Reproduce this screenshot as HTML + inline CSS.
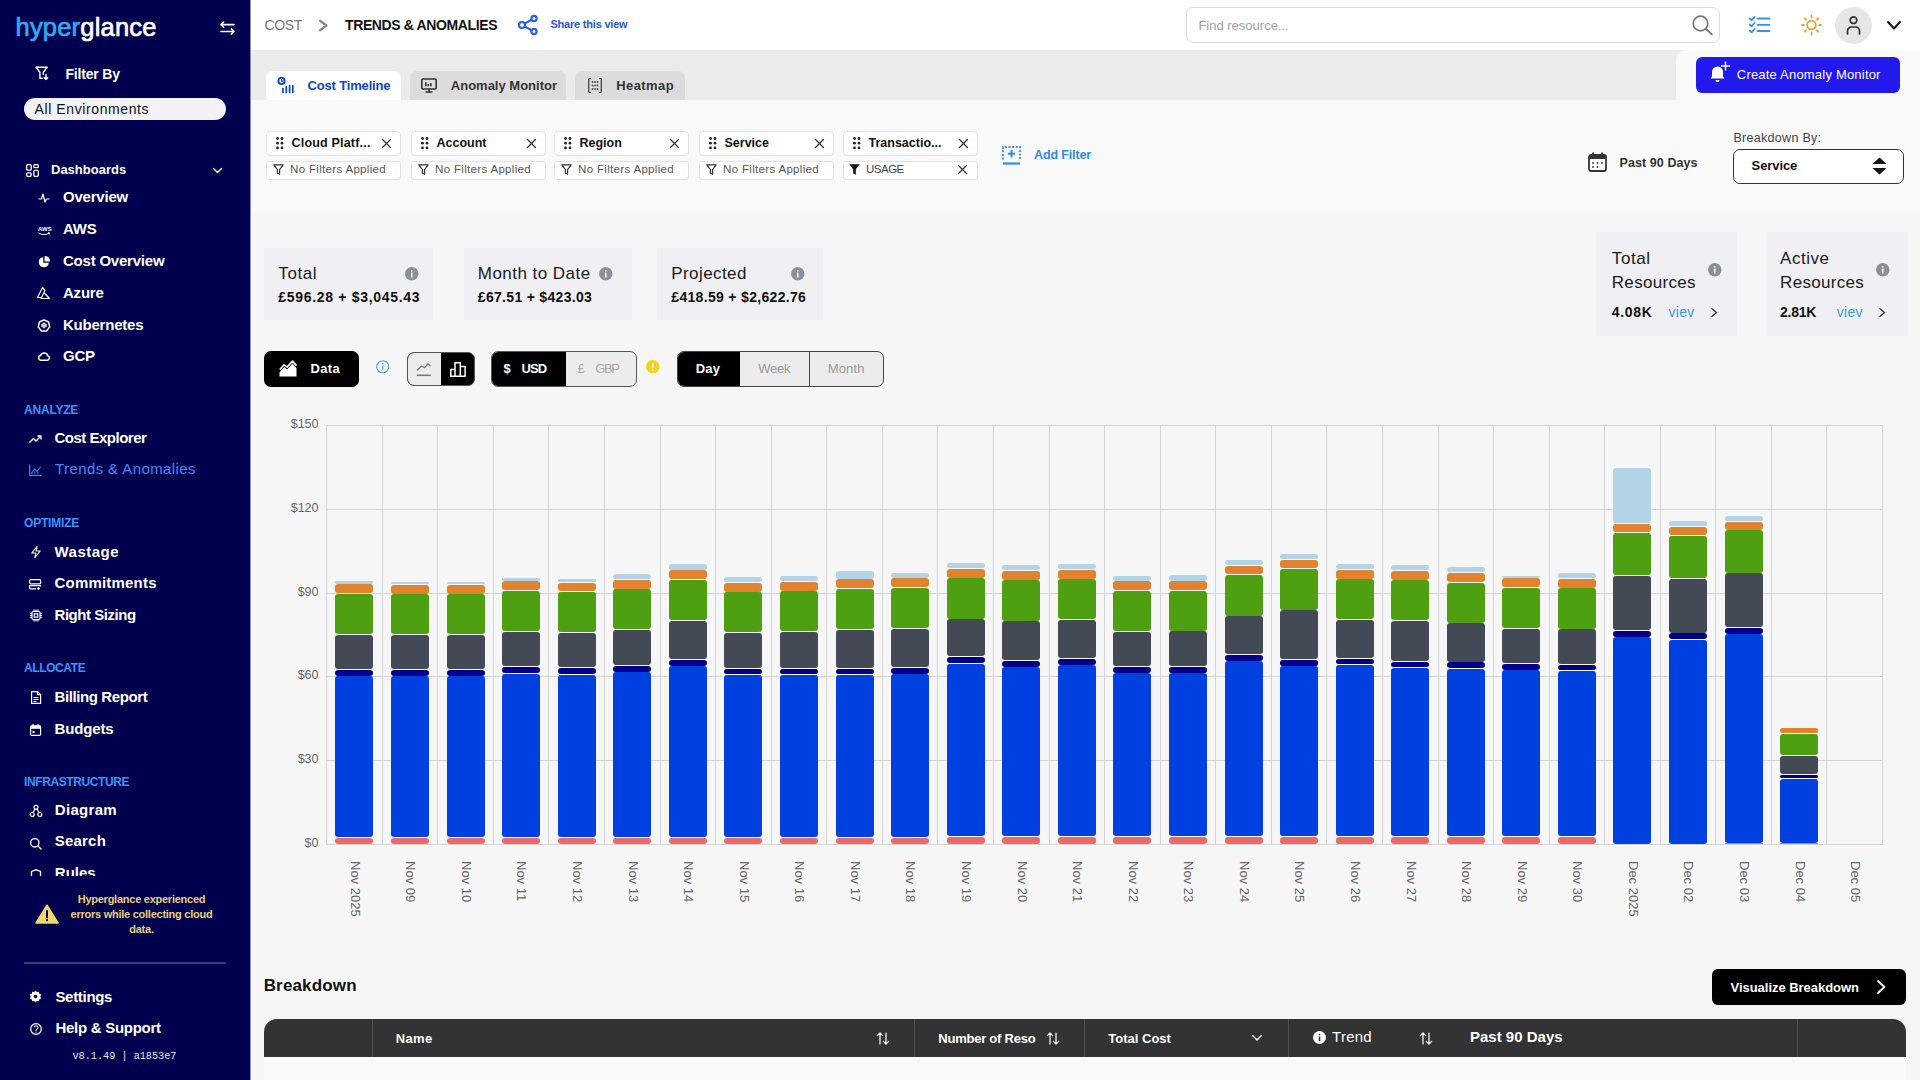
<!DOCTYPE html>
<html><head><meta charset="utf-8">
<style>
*{box-sizing:border-box;margin:0;padding:0}
html,body{width:1920px;height:1080px;overflow:hidden}
body{position:relative;background:#f6f6f6;font-family:"Liberation Sans",sans-serif;color:#111}
.a{position:absolute}
.t{position:absolute;white-space:nowrap;line-height:1}
svg{position:absolute;overflow:visible}
.vl{position:absolute;writing-mode:vertical-rl;white-space:nowrap;line-height:1;font-size:13px;color:#666}
</style></head><body>
<div class="a" style="left:0px;top:0px;width:250px;height:1080px;background:#00004e;"></div>
<div class="a" style="left:250px;top:0px;width:1px;height:1080px;background:#8c8cb4;"></div>
<div class="t" style="left:15.5px;top:14.5px;font-size:25.5px;letter-spacing:0.2px"><span style="color:#2eacf3;-webkit-text-stroke:0.7px #2eacf3">hyper</span><span style="color:#fff;-webkit-text-stroke:0.7px #fff">glance</span></div>
<svg style="left:220px;top:21px;" width="15" height="14" viewBox="0 0 15 14"><path d="M1 3.6h13M3.6 1L1 3.6l2.6 2.6M1 10.5h13M11.4 7.9l2.6 2.6-2.6 2.6" fill="none" stroke="#fff" stroke-width="1.6" stroke-linecap="round" stroke-linejoin="round"/></svg>
<svg style="left:35px;top:65.5px;" width="14" height="15" viewBox="0 0 14 15"><g fill="none" stroke="#fff" stroke-width="1.4" stroke-linejoin="round" stroke-linecap="round"><path d="M1 1.2h11.2L8.3 6.2V8.5M4.9 6.2L1 1.2M4.9 6.2V12.3h2.2"/><path d="M11 8.5v5M9.3 11.8l1.7 1.7 1.7-1.7"/></g></svg>
<div class="t" style="left:65.5px;top:67.15px;font-size:14px;font-weight:bold;color:#fff;letter-spacing:-0.2px;">Filter By</div>
<div class="a" style="left:24px;top:98px;width:202px;height:22px;background:#f3f3f7;border-radius:11px;"></div>
<div class="t" style="left:34.5px;top:101.85px;font-size:14px;color:#111;letter-spacing:0.6px;">All Environments</div>
<svg style="left:26px;top:164px;" width="13" height="13" viewBox="0 0 13 13"><g fill="none" stroke="#fff" stroke-width="1.3"><rect x="0.7" y="0.7" width="4.5" height="5.5" rx="1"/><rect x="7.8" y="0.7" width="4.5" height="3" rx="1"/><rect x="0.7" y="8.8" width="4.5" height="3.5" rx="1"/><rect x="7.8" y="6.3" width="4.5" height="6" rx="1"/></g></svg>
<div class="t" style="left:51.0px;top:163.40px;font-size:13px;font-weight:bold;color:#fff;">Dashboards</div>
<svg style="left:213px;top:168px;" width="9" height="5" viewBox="0 0 9 5"><path d="M0.5 0.5l4 4 4-4" fill="none" stroke="#fff" stroke-width="1.3" stroke-linecap="round"/></svg>
<div class="t" style="left:63.0px;top:188.90px;font-size:15px;font-weight:bold;color:#fff;letter-spacing:-0.22px;">Overview</div>
<div class="t" style="left:63.0px;top:220.50px;font-size:15px;font-weight:bold;color:#fff;letter-spacing:-0.22px;">AWS</div>
<div class="t" style="left:63.0px;top:252.50px;font-size:15px;font-weight:bold;color:#fff;letter-spacing:-0.22px;">Cost Overview</div>
<div class="t" style="left:63.0px;top:284.50px;font-size:15px;font-weight:bold;color:#fff;letter-spacing:-0.22px;">Azure</div>
<div class="t" style="left:63.0px;top:316.50px;font-size:15px;font-weight:bold;color:#fff;letter-spacing:-0.22px;">Kubernetes</div>
<div class="t" style="left:63.0px;top:347.50px;font-size:15px;font-weight:bold;color:#fff;letter-spacing:-0.22px;">GCP</div>
<svg style="left:38px;top:193px;" width="12" height="10" viewBox="0 0 12 10"><path d="M0.5 6h3l1.5-5 2 8 1.5-3h3" fill="none" stroke="#fff" stroke-width="1.2" stroke-linejoin="round"/></svg>
<svg style="left:38px;top:225px;" width="12" height="11" viewBox="0 0 12 11"><text x="0" y="6" font-size="6" font-weight="bold" fill="#fff" font-family="Liberation Sans">AWS</text><path d="M0.5 8c3 2 8 2 11 0M10 7.5l1.5 0.5-0.5 1.5" fill="none" stroke="#fff" stroke-width="1"/></svg>
<svg style="left:38px;top:256px;" width="12" height="12" viewBox="0 0 12 12"><path d="M5.3 1.2A5 5 0 1 0 10.8 6.7H5.3z" fill="#fff"/><path d="M6.6 0A5 5 0 0 1 12 5.4H6.6z" fill="#fff"/></svg>
<svg style="left:37px;top:287px;" width="13" height="12" viewBox="0 0 13 12"><path d="M5.5 0.5L0.5 10.5h4L8 3.5zM6.8 5.5l5.7 6H3.5" fill="none" stroke="#fff" stroke-width="1.2" stroke-linejoin="round"/></svg>
<svg style="left:38px;top:319px;" width="12" height="12" viewBox="0 0 12 12"><path d="M6 0.8l4.6 2.2 1.1 5-3.2 4H3.5L0.3 8l1.1-5z" fill="none" stroke="#fff" stroke-width="1.4" stroke-linejoin="round"/><circle cx="6" cy="6.4" r="2" fill="none" stroke="#fff" stroke-width="1"/><path d="M6 3v6.8M2.9 5.2l6.2 2.4M9.1 5.2L2.9 7.6" stroke="#fff" stroke-width="0.8"/></svg>
<svg style="left:38px;top:351px;" width="12" height="10" viewBox="0 0 12 10"><path d="M3.2 9.2h6a2.3 2.3 0 0 0 .6-4.5A3.8 3.8 0 0 0 2.6 4.6 2.3 2.3 0 0 0 3.2 9.2z" fill="none" stroke="#fff" stroke-width="1.5" stroke-linejoin="round"/></svg>
<div class="t" style="left:24.0px;top:403.84px;font-size:12px;font-weight:bold;color:#3597f7;letter-spacing:-0.2px;">ANALYZE</div>
<svg style="left:29px;top:435px;" width="13" height="8" viewBox="0 0 13 8"><path d="M0.5 7.5l4-4 2.5 2.5 5-5M9 1h3v3" fill="none" stroke="#fff" stroke-width="1.3" stroke-linejoin="round" stroke-linecap="round"/></svg>
<div class="t" style="left:54.5px;top:429.70px;font-size:15px;font-weight:bold;color:#fff;letter-spacing:-0.5px;">Cost Explorer</div>
<svg style="left:29px;top:464px;" width="13" height="12" viewBox="0 0 13 12"><path d="M0.7 0.5v11h11.5" fill="none" stroke="#3a8ef5" stroke-width="1.2"/><path d="M2.5 9l3-4 2.5 2.5 3.5-4.5" fill="none" stroke="#3a8ef5" stroke-width="1.1"/><path d="M3 10.5v-2M6 10.5v-3M9 10.5v-2.5" stroke="#3a8ef5" stroke-width="1"/></svg>
<div class="t" style="left:55.0px;top:460.60px;font-size:15px;color:#3b8ef3;letter-spacing:0.4px;">Trends &amp; Anomalies</div>
<div class="t" style="left:24.0px;top:516.84px;font-size:12px;font-weight:bold;color:#3597f7;letter-spacing:-0.2px;">OPTIMIZE</div>
<svg style="left:31px;top:546px;" width="10" height="12" viewBox="0 0 10 12"><path d="M6 0.5L0.8 7h4L4 11.5 9.2 5h-4z" fill="none" stroke="#fff" stroke-width="1.2" stroke-linejoin="round"/></svg>
<div class="t" style="left:54.5px;top:543.50px;font-size:15px;font-weight:bold;color:#fff;letter-spacing:0.5px;">Wastage</div>
<svg style="left:29px;top:579px;" width="13" height="11" viewBox="0 0 13 11"><g fill="none" stroke="#fff" stroke-width="1.2"><rect x="0.6" y="0.6" width="11" height="4.2" rx="1"/><path d="M7 9.8H1.6a1 1 0 0 1-1-1V6.6h11v1"/><path d="M9.5 8v3M8 9.5h3"/></g></svg>
<div class="t" style="left:54.5px;top:574.70px;font-size:15px;font-weight:bold;color:#fff;letter-spacing:0.2px;">Commitments</div>
<svg style="left:30px;top:609px;" width="12" height="13" viewBox="0 0 12 13"><g fill="none" stroke="#fff" stroke-width="1.2"><rect x="2" y="2.5" width="8" height="8" rx="1.2"/><rect x="4.3" y="4.8" width="3.4" height="3.4"/><path d="M4 0.5v2M6 0.5v2M8 0.5v2M4 10.5v2M6 10.5v2M8 10.5v2M0 4.5h2M0 6.5h2M0 8.5h2M10 4.5h2M10 6.5h2M10 8.5h2"/></g></svg>
<div class="t" style="left:54.5px;top:606.90px;font-size:15px;font-weight:bold;color:#fff;letter-spacing:-0.45px;">Right Sizing</div>
<div class="t" style="left:24.0px;top:661.84px;font-size:12px;font-weight:bold;color:#3597f7;letter-spacing:-0.4px;">ALLOCATE</div>
<svg style="left:31px;top:691px;" width="10" height="13" viewBox="0 0 10 13"><g fill="none" stroke="#fff" stroke-width="1.2" stroke-linejoin="round"><path d="M0.6 0.6h6l3 3v8.8H0.6z"/><path d="M6.5 0.6v3h3M2.5 6.5h5M2.5 8.5h5M2.5 10.5h3"/></g></svg>
<div class="t" style="left:54.5px;top:689.10px;font-size:15px;font-weight:bold;color:#fff;letter-spacing:-0.4px;">Billing Report</div>
<svg style="left:30px;top:724px;" width="11" height="12" viewBox="0 0 11 12"><g fill="none" stroke="#fff" stroke-width="1.2"><rect x="0.6" y="1.8" width="10" height="9.6" rx="1.2"/><path d="M3 0v3M8 0v3"/></g><rect x="0.6" y="1.8" width="10" height="3" fill="#fff"/><rect x="2.5" y="7" width="2" height="2" fill="#fff"/></svg>
<div class="t" style="left:54.5px;top:721.10px;font-size:15px;font-weight:bold;color:#fff;letter-spacing:-0.15px;">Budgets</div>
<div class="t" style="left:24.0px;top:775.84px;font-size:12px;font-weight:bold;color:#3597f7;letter-spacing:-0.4px;">INFRASTRUCTURE</div>
<svg style="left:30px;top:805px;" width="12" height="12" viewBox="0 0 12 12"><g fill="none" stroke="#fff" stroke-width="1.2"><circle cx="6" cy="2.3" r="2"/><circle cx="2.2" cy="9.5" r="2"/><circle cx="9.8" cy="9.5" r="2"/><path d="M5 4l-2 3.6M7 4l2 3.6"/></g></svg>
<div class="t" style="left:54.8px;top:801.80px;font-size:15px;font-weight:bold;color:#fff;letter-spacing:0.3px;">Diagram</div>
<svg style="left:30px;top:838px;" width="12" height="12" viewBox="0 0 12 12"><g fill="none" stroke="#fff" stroke-width="1.3"><circle cx="4.8" cy="4.8" r="4.2"/><path d="M8 8l3.5 3.5"/></g></svg>
<div class="t" style="left:54.8px;top:833.20px;font-size:15px;font-weight:bold;color:#fff;letter-spacing:0.2px;">Search</div>
<div class="a" style="left:0;top:860px;width:250px;height:16px;overflow:hidden">
<svg style="left:30px;top:9px;" width="12" height="14" viewBox="0 0 12 14"><path d="M1.5 2.5L6 0.8l4.5 1.7V7.5Q10.5 11.5 6 13.5Q1.5 11.5 1.5 7.5z" fill="none" stroke="#fff" stroke-width="1.3"/></svg>
<div class="t" style="left:54.8px;top:5px;font-size:15px;font-weight:bold;color:#fff">Rules</div></div>
<svg style="left:35px;top:904px;" width="24" height="20" viewBox="0 0 24 20"><path d="M12 1.2L23 19H1z" fill="#f2d76b" stroke="#f2d76b" stroke-width="1.5" stroke-linejoin="round"/><path d="M12 7v6.5" stroke="#00004e" stroke-width="2" stroke-linecap="round"/><circle cx="12" cy="16.2" r="1.1" fill="#00004e"/></svg>
<div class="t" style="left:60px;width:163px;text-align:center;top:893.69px;font-size:11px;font-weight:bold;color:#e8d277;letter-spacing:-0.25px">Hyperglance experienced</div>
<div class="t" style="left:60px;width:163px;text-align:center;top:909.09px;font-size:11px;font-weight:bold;color:#e8d277;letter-spacing:-0.25px">errors while collecting cloud</div>
<div class="t" style="left:60px;width:163px;text-align:center;top:924.49px;font-size:11px;font-weight:bold;color:#e8d277;letter-spacing:-0.25px">data.</div>
<div class="a" style="left:24px;top:962px;width:202px;height:1.5px;background:#3c3c78;"></div>
<svg style="left:29px;top:990px;" width="13" height="13" viewBox="0 0 13 13"><path d="M6.5 0.5l1.3 1.6 2-.4.5 2 1.9.9-.9 1.9.9 1.9-1.9.9-.5 2-2-.4-1.3 1.6-1.3-1.6-2 .4-.5-2-1.9-.9.9-1.9-.9-1.9 1.9-.9.5-2 2 .4z" fill="#fff"/><circle cx="6.5" cy="6.5" r="1.8" fill="#00004e"/></svg>
<div class="t" style="left:55.4px;top:988.60px;font-size:15px;font-weight:bold;color:#fff;letter-spacing:-0.3px;">Settings</div>
<svg style="left:29.6px;top:1023px;" width="12" height="12" viewBox="0 0 12 12"><circle cx="6" cy="6" r="5.3" fill="none" stroke="#fff" stroke-width="1.2"/><path d="M4.3 4.6a1.8 1.8 0 1 1 2.4 1.7c-.5.2-.7.6-.7 1.1v.4" fill="none" stroke="#fff" stroke-width="1.1"/><circle cx="6" cy="9.1" r="0.7" fill="#fff"/></svg>
<div class="t" style="left:55.4px;top:1020.30px;font-size:15px;font-weight:bold;color:#fff;letter-spacing:-0.27px;">Help &amp; Support</div>
<div class="t" style="left:72.5px;top:1051.5px;font-size:10.2px;font-family:'Liberation Mono',monospace;color:#e6e6f0">v8.1.49 | a1853e7</div>
<div class="a" style="left:251px;top:0px;width:1669px;height:50px;background:#ffffff;"></div>
<div class="a" style="left:251px;top:50px;width:1425px;height:50px;background:#ebebeb;"></div>
<div class="a" style="left:251px;top:100px;width:1669px;height:112px;background:#f9f9f9;"></div>
<div class="a" style="left:1676px;top:50px;width:244px;height:50px;background:#ebebeb;"></div>
<div class="a" style="left:1676px;top:50px;width:244px;height:50px;background:#f9f9f9;border-radius:10px 0 0 0"></div>
<div class="t" style="left:264.5px;top:18.15px;font-size:14px;color:#75757a;letter-spacing:-0.4px;">COST</div>
<svg style="left:319px;top:20px;" width="9" height="11" viewBox="0 0 9 11"><path d="M1 0.8l6.5 4.7L1 10.2" fill="none" stroke="#888" stroke-width="2.3" stroke-linecap="round" stroke-linejoin="round"/></svg>
<div class="t" style="left:345.0px;top:18.15px;font-size:14px;font-weight:bold;color:#111;letter-spacing:-0.38px;">TRENDS &amp; ANOMALIES</div>
<svg style="left:518px;top:15px;" width="20" height="20" viewBox="0 0 20 20"><g fill="none" stroke="#2d5fe2" stroke-width="2.2"><circle cx="4" cy="10" r="3"/><circle cx="16" cy="3.5" r="2.6"/><circle cx="16" cy="16.5" r="2.6"/><path d="M6.6 8.6l7-3.8M6.6 11.4l7 3.8"/></g></svg>
<div class="t" style="left:550.4px;top:18.69px;font-size:11px;font-weight:bold;color:#2c57da;letter-spacing:-0.2px;">Share this view</div>
<div class="a" style="left:1186px;top:7px;width:534px;height:36px;border:1px solid #dcdcdc;border-radius:7px;background:#fff"></div>
<div class="t" style="left:1198.4px;top:18.50px;font-size:13px;color:#9ba0a8;">Find resource...</div>
<svg style="left:1692px;top:15px;" width="21" height="20" viewBox="0 0 21 20"><g fill="none" stroke="#777" stroke-width="1.7"><circle cx="8.5" cy="8.5" r="7.3"/><path d="M14 14l6 5.5" stroke-linecap="round"/></g></svg>
<svg style="left:1749px;top:16px;" width="21" height="18" viewBox="0 0 21 18"><g fill="none" stroke="#3590e6" stroke-width="1.8" stroke-linecap="round" stroke-linejoin="round"><path d="M0.8 2.5l1.8 1.8L5.5 1M0.8 8.5l1.8 1.8L5.5 7M0.8 14.5l1.8 1.8L5.5 13"/><path d="M8.5 2.5h12M8.5 8.8h12M8.5 15h12"/></g></svg>
<svg style="left:1801px;top:15px;" width="21" height="20" viewBox="0 0 21 20"><g fill="none" stroke="#f19c2d" stroke-width="1.8" stroke-linecap="round"><circle cx="10.5" cy="10" r="4.3"/><path d="M10.5 0.5v1.8M10.5 17.7v1.8M1 10h1.8M18.2 10H20M3.8 3.3l1.3 1.3M15.9 15.4l1.3 1.3M3.8 16.7l1.3-1.3M15.9 4.6l1.3-1.3"/></g></svg>
<div class="a" style="left:1835px;top:7px;width:37px;height:37px;background:#e6e6e6;border-radius:19px;"></div>
<svg style="left:1845px;top:16px;" width="17" height="19" viewBox="0 0 17 19"><g fill="none" stroke="#333" stroke-width="1.7"><circle cx="8.5" cy="4.2" r="3.3"/><path d="M2.5 18v-3a4 4 0 0 1 4-4h4a4 4 0 0 1 4 4v3" stroke-linecap="round"/></g></svg>
<svg style="left:1887px;top:20.5px;" width="14" height="8.5" viewBox="0 0 14 8.5"><path d="M1 1l6 6.5 6-6.5" fill="none" stroke="#111" stroke-width="2" stroke-linecap="round" stroke-linejoin="round"/></svg>
<div class="a" style="left:266px;top:71px;width:135px;height:29px;background:#fff;border-radius:7px 7px 0 0"></div>
<div class="a" style="left:410px;top:71px;width:156px;height:29px;background:#dcdcdc;border-radius:7px 7px 0 0"></div>
<div class="a" style="left:575px;top:71px;width:110px;height:29px;background:#dcdcdc;border-radius:7px 7px 0 0"></div>
<svg style="left:277px;top:77px;" width="17" height="17" viewBox="0 0 17 17"><circle cx="4.5" cy="4" r="3.1" fill="none" stroke="#0b44cc" stroke-width="1.9"/><path d="M4.5 2.3v1.9h1.8" fill="none" stroke="#0b44cc" stroke-width="1.2"/><path d="M6 11.5v4M9.3 9.5v6M12.6 8.5v7M15.8 8.5v7" stroke="#0b44cc" stroke-width="1.7" stroke-linecap="round"/></svg>
<div class="t" style="left:307.4px;top:79.20px;font-size:13px;font-weight:bold;color:#0b44cc;letter-spacing:-0.15px;">Cost Timeline</div>
<svg style="left:421px;top:78px;" width="16" height="15" viewBox="0 0 16 15"><g fill="none" stroke="#333" stroke-width="1.6"><rect x="0.8" y="1" width="14.4" height="10" rx="1.2"/><path d="M8 11v2.8M4.5 14h7M4.8 8.3V4.3M7.3 8.3V6M9.8 8.3V5.3"/></g></svg>
<div class="t" style="left:450.8px;top:79.20px;font-size:13px;font-weight:bold;color:#333;">Anomaly Monitor</div>
<svg style="left:588px;top:78px;" width="14" height="15" viewBox="0 0 14 15"><g fill="none" stroke="#444" stroke-width="1.3"><path d="M3 0.7H1.5a.8.8 0 0 0-.8.8v12a.8.8 0 0 0 .8.8H3M11 0.7h1.5a.8.8 0 0 1 .8.8v12a.8.8 0 0 1-.8.8H11"/></g><g fill="#444"><circle cx="4.5" cy="4" r="0.9"/><circle cx="7" cy="4" r="0.9"/><circle cx="9.5" cy="4" r="0.9"/><circle cx="4.5" cy="7.5" r="0.9"/><circle cx="7" cy="7.5" r="0.9"/><circle cx="9.5" cy="7.5" r="0.9"/><circle cx="4.5" cy="11" r="0.9"/><circle cx="7" cy="11" r="0.9"/><circle cx="9.5" cy="11" r="0.9"/></g></svg>
<div class="t" style="left:616.3px;top:79.20px;font-size:13px;font-weight:bold;color:#333;letter-spacing:0.4px;">Heatmap</div>
<div class="a" style="left:1696px;top:57px;width:204px;height:35.5px;background:#2219ee;border-radius:6px"></div>
<svg style="left:1710px;top:61px;" width="21" height="21" viewBox="0 0 21 21"><path d="M7.5 5.5a5.5 5.5 0 0 0-5.5 5.5v4.5L0.5 17.5h14L13 15.5V11a5.5 5.5 0 0 0-5.5-5.5z" fill="#fff"/><path d="M5.5 19a2 2 0 0 0 4 0z" fill="#fff"/><path d="M15.5 0.5v9M11 5h9" stroke="#fff" stroke-width="1.4"/></svg>
<div class="t" style="left:1736.8px;top:67.70px;font-size:13px;color:#fff;letter-spacing:0.2px;">Create Anomaly Monitor</div>
<div class="a" style="left:266px;top:130.5px;width:135px;height:25px;background:#fff;border:1px solid #e2e2e2;border-radius:4px"></div>
<div class="a" style="left:266px;top:160.5px;width:135px;height:19.3px;background:#fff;border:1px solid #e2e2e2;border-radius:3px"></div>
<svg style="left:276px;top:137px;" width="8" height="13" viewBox="0 0 8 13"><g fill="#222"><circle cx="1.5" cy="1.5" r="1.4"/><circle cx="6" cy="1.5" r="1.4"/><circle cx="1.5" cy="6.2" r="1.4"/><circle cx="6" cy="6.2" r="1.4"/><circle cx="1.5" cy="10.9" r="1.4"/><circle cx="6" cy="10.9" r="1.4"/></g></svg>
<div class="t" style="left:291.5px;top:136.92px;font-size:12.5px;font-weight:bold;color:#111;letter-spacing:0.19px;">Cloud Platf...</div>
<svg style="left:382px;top:139px;" width="9" height="9" viewBox="0 0 9 9"><path d="M0.5 0.5l8 8M8.5 0.5l-8 8" stroke="#333" stroke-width="1.3" stroke-linecap="round"/></svg>
<svg style="left:272.5px;top:163.8px;" width="11" height="11" viewBox="0 0 11 11"><path d="M0.8 0.8h9.4L6.6 5.5v4.8L4.4 9.2V5.5z" fill="none" stroke="#333" stroke-width="1.2" stroke-linejoin="round"/></svg>
<div class="t" style="left:290.0px;top:164.47px;font-size:11.5px;color:#555;letter-spacing:0.33px;">No Filters Applied</div>
<div class="a" style="left:411px;top:130.5px;width:135px;height:25px;background:#fff;border:1px solid #e2e2e2;border-radius:4px"></div>
<div class="a" style="left:411px;top:160.5px;width:135px;height:19.3px;background:#fff;border:1px solid #e2e2e2;border-radius:3px"></div>
<svg style="left:421px;top:137px;" width="8" height="13" viewBox="0 0 8 13"><g fill="#222"><circle cx="1.5" cy="1.5" r="1.4"/><circle cx="6" cy="1.5" r="1.4"/><circle cx="1.5" cy="6.2" r="1.4"/><circle cx="6" cy="6.2" r="1.4"/><circle cx="1.5" cy="10.9" r="1.4"/><circle cx="6" cy="10.9" r="1.4"/></g></svg>
<div class="t" style="left:436.5px;top:136.92px;font-size:12.5px;font-weight:bold;color:#111;">Account</div>
<svg style="left:527px;top:139px;" width="9" height="9" viewBox="0 0 9 9"><path d="M0.5 0.5l8 8M8.5 0.5l-8 8" stroke="#333" stroke-width="1.3" stroke-linecap="round"/></svg>
<svg style="left:417.5px;top:163.8px;" width="11" height="11" viewBox="0 0 11 11"><path d="M0.8 0.8h9.4L6.6 5.5v4.8L4.4 9.2V5.5z" fill="none" stroke="#333" stroke-width="1.2" stroke-linejoin="round"/></svg>
<div class="t" style="left:435.0px;top:164.47px;font-size:11.5px;color:#555;letter-spacing:0.33px;">No Filters Applied</div>
<div class="a" style="left:554px;top:130.5px;width:135px;height:25px;background:#fff;border:1px solid #e2e2e2;border-radius:4px"></div>
<div class="a" style="left:554px;top:160.5px;width:135px;height:19.3px;background:#fff;border:1px solid #e2e2e2;border-radius:3px"></div>
<svg style="left:564px;top:137px;" width="8" height="13" viewBox="0 0 8 13"><g fill="#222"><circle cx="1.5" cy="1.5" r="1.4"/><circle cx="6" cy="1.5" r="1.4"/><circle cx="1.5" cy="6.2" r="1.4"/><circle cx="6" cy="6.2" r="1.4"/><circle cx="1.5" cy="10.9" r="1.4"/><circle cx="6" cy="10.9" r="1.4"/></g></svg>
<div class="t" style="left:579.5px;top:136.92px;font-size:12.5px;font-weight:bold;color:#111;">Region</div>
<svg style="left:670px;top:139px;" width="9" height="9" viewBox="0 0 9 9"><path d="M0.5 0.5l8 8M8.5 0.5l-8 8" stroke="#333" stroke-width="1.3" stroke-linecap="round"/></svg>
<svg style="left:560.5px;top:163.8px;" width="11" height="11" viewBox="0 0 11 11"><path d="M0.8 0.8h9.4L6.6 5.5v4.8L4.4 9.2V5.5z" fill="none" stroke="#333" stroke-width="1.2" stroke-linejoin="round"/></svg>
<div class="t" style="left:578.0px;top:164.47px;font-size:11.5px;color:#555;letter-spacing:0.33px;">No Filters Applied</div>
<div class="a" style="left:699px;top:130.5px;width:135px;height:25px;background:#fff;border:1px solid #e2e2e2;border-radius:4px"></div>
<div class="a" style="left:699px;top:160.5px;width:135px;height:19.3px;background:#fff;border:1px solid #e2e2e2;border-radius:3px"></div>
<svg style="left:709px;top:137px;" width="8" height="13" viewBox="0 0 8 13"><g fill="#222"><circle cx="1.5" cy="1.5" r="1.4"/><circle cx="6" cy="1.5" r="1.4"/><circle cx="1.5" cy="6.2" r="1.4"/><circle cx="6" cy="6.2" r="1.4"/><circle cx="1.5" cy="10.9" r="1.4"/><circle cx="6" cy="10.9" r="1.4"/></g></svg>
<div class="t" style="left:724.5px;top:136.92px;font-size:12.5px;font-weight:bold;color:#111;">Service</div>
<svg style="left:815px;top:139px;" width="9" height="9" viewBox="0 0 9 9"><path d="M0.5 0.5l8 8M8.5 0.5l-8 8" stroke="#333" stroke-width="1.3" stroke-linecap="round"/></svg>
<svg style="left:705.5px;top:163.8px;" width="11" height="11" viewBox="0 0 11 11"><path d="M0.8 0.8h9.4L6.6 5.5v4.8L4.4 9.2V5.5z" fill="none" stroke="#333" stroke-width="1.2" stroke-linejoin="round"/></svg>
<div class="t" style="left:723.0px;top:164.47px;font-size:11.5px;color:#555;letter-spacing:0.33px;">No Filters Applied</div>
<div class="a" style="left:843px;top:130.5px;width:135px;height:25px;background:#fff;border:1px solid #e2e2e2;border-radius:4px"></div>
<div class="a" style="left:843px;top:160.5px;width:135px;height:19.3px;background:#fff;border:1px solid #e2e2e2;border-radius:3px"></div>
<svg style="left:853px;top:137px;" width="8" height="13" viewBox="0 0 8 13"><g fill="#222"><circle cx="1.5" cy="1.5" r="1.4"/><circle cx="6" cy="1.5" r="1.4"/><circle cx="1.5" cy="6.2" r="1.4"/><circle cx="6" cy="6.2" r="1.4"/><circle cx="1.5" cy="10.9" r="1.4"/><circle cx="6" cy="10.9" r="1.4"/></g></svg>
<div class="t" style="left:868.5px;top:136.92px;font-size:12.5px;font-weight:bold;color:#111;">Transactio...</div>
<svg style="left:959px;top:139px;" width="9" height="9" viewBox="0 0 9 9"><path d="M0.5 0.5l8 8M8.5 0.5l-8 8" stroke="#333" stroke-width="1.3" stroke-linecap="round"/></svg>
<svg style="left:849px;top:163.8px;" width="11" height="11" viewBox="0 0 11 11"><path d="M0.3 0.3h10.4L6.8 5.2v5.5L4.2 9.5V5.2z" fill="#111"/></svg>
<div class="t" style="left:866.0px;top:164.47px;font-size:11.5px;color:#444;letter-spacing:-0.5px;">USAGE</div>
<svg style="left:958px;top:165px;" width="9" height="9" viewBox="0 0 9 9"><path d="M0.5 0.5l8 8M8.5 0.5l-8 8" stroke="#333" stroke-width="1.3" stroke-linecap="round"/></svg>
<svg style="left:1002px;top:146px;" width="19" height="19" viewBox="0 0 19 19"><g fill="none" stroke="#2f8be6" stroke-width="1.8" stroke-dasharray="2 1.6"><path d="M1 13.5V1h17v12.5"/></g><path d="M1 17.5h17" stroke="#2f8be6" stroke-width="2.2"/><path d="M9.5 4v7.5M5.8 7.8h7.4" stroke="#2f8be6" stroke-width="2"/></svg>
<div class="t" style="left:1034.0px;top:149.22px;font-size:12.5px;font-weight:bold;color:#2f8be6;letter-spacing:-0.13px;">Add Filter</div>
<svg style="left:1588px;top:152px;" width="19" height="20" viewBox="0 0 19 20"><g fill="none" stroke="#333" stroke-width="1.8"><rect x="1" y="3" width="17" height="16" rx="2"/></g><path d="M1 3h17v4H1z" fill="#333"/><path d="M5 0.5v4M14 0.5v4" stroke="#333" stroke-width="1.8"/><g fill="#333"><circle cx="5" cy="11" r="0.9"/><circle cx="9.5" cy="11" r="0.9"/><circle cx="14" cy="11" r="0.9"/><circle cx="5" cy="15" r="0.9"/><circle cx="9.5" cy="15" r="0.9"/></g></svg>
<div class="t" style="left:1619.6px;top:156.62px;font-size:12.5px;font-weight:bold;color:#333;letter-spacing:0.07px;">Past 90 Days</div>
<div class="t" style="left:1733.4px;top:131.72px;font-size:12.5px;color:#444;letter-spacing:0.3px;">Breakdown By:</div>
<div class="a" style="left:1733px;top:148.5px;width:171px;height:35px;border:1.2px solid #333;border-radius:7px;background:#fff"></div>
<div class="t" style="left:1751.6px;top:159.00px;font-size:13px;font-weight:bold;color:#111;letter-spacing:-0.1px;">Service</div>
<svg style="left:1872px;top:157px;" width="15" height="18" viewBox="0 0 15 18"><path d="M7.5 0.5L14.5 7H0.5zM0.5 11h14l-7 6.5z" fill="#111"/></svg>
<div class="a" style="left:264px;top:248px;width:169px;height:72px;background:#efeff4;"></div>
<div class="t" style="left:278.3px;top:265.41px;font-size:17px;color:#1a1a1a;letter-spacing:0.6px;">Total</div>
<svg style="left:405.2px;top:266.8px;" width="13.5" height="13.5" viewBox="0 0 13.5 13.5"><circle cx="6.75" cy="6.75" r="6.75" fill="#8a909b"/><path d="M6.75 5.67v4.859999999999999" stroke="#fff" stroke-width="1.6"/><circle cx="6.75" cy="3.7800000000000002" r="0.9" fill="#fff"/></svg>
<div class="t" style="left:278.3px;top:289.85px;font-size:14px;font-weight:bold;color:#111;letter-spacing:0.69px;">£596.28 + $3,045.43</div>
<div class="a" style="left:463.5px;top:248px;width:168px;height:72px;background:#efeff4;"></div>
<div class="t" style="left:477.8px;top:265.41px;font-size:17px;color:#1a1a1a;letter-spacing:0.46px;">Month to Date</div>
<svg style="left:599.4px;top:266.8px;" width="13.5" height="13.5" viewBox="0 0 13.5 13.5"><circle cx="6.75" cy="6.75" r="6.75" fill="#8a909b"/><path d="M6.75 5.67v4.859999999999999" stroke="#fff" stroke-width="1.6"/><circle cx="6.75" cy="3.7800000000000002" r="0.9" fill="#fff"/></svg>
<div class="t" style="left:477.8px;top:289.85px;font-size:14px;font-weight:bold;color:#111;letter-spacing:0.31px;">£67.51 + $423.03</div>
<div class="a" style="left:657px;top:248px;width:166px;height:72px;background:#efeff4;"></div>
<div class="t" style="left:671.3px;top:265.41px;font-size:17px;color:#1a1a1a;letter-spacing:0.41px;">Projected</div>
<svg style="left:791.3px;top:266.8px;" width="13.5" height="13.5" viewBox="0 0 13.5 13.5"><circle cx="6.75" cy="6.75" r="6.75" fill="#8a909b"/><path d="M6.75 5.67v4.859999999999999" stroke="#fff" stroke-width="1.6"/><circle cx="6.75" cy="3.7800000000000002" r="0.9" fill="#fff"/></svg>
<div class="t" style="left:671.3px;top:289.85px;font-size:14px;font-weight:bold;color:#111;letter-spacing:0.32px;">£418.59 + $2,622.76</div>
<div class="a" style="left:1596px;top:231.5px;width:141px;height:104px;background:#efeff4;"></div>
<div class="t" style="left:1611.8px;top:249.51px;font-size:17px;color:#1a1a1a;letter-spacing:0.6px;">Total</div>
<div class="t" style="left:1611.8px;top:273.81px;font-size:17px;color:#1a1a1a;letter-spacing:0.3px;">Resources</div>
<svg style="left:1708px;top:263.3px;" width="13.5" height="13.5" viewBox="0 0 13.5 13.5"><circle cx="6.75" cy="6.75" r="6.75" fill="#8a909b"/><path d="M6.75 5.67v4.859999999999999" stroke="#fff" stroke-width="1.6"/><circle cx="6.75" cy="3.7800000000000002" r="0.9" fill="#fff"/></svg>
<div class="t" style="left:1611.8px;top:305.05px;font-size:14px;font-weight:bold;color:#111;letter-spacing:0.67px;">4.08K</div>
<div class="t" style="left:1668.5px;top:305.05px;font-size:14px;color:#3a9be6;letter-spacing:0.3px;">viev</div>
<svg style="left:1711px;top:308px;" width="7" height="9" viewBox="0 0 7 9"><path d="M1 0.8l4.5 3.7L1 8.2" fill="none" stroke="#333" stroke-width="1.4" stroke-linecap="round"/></svg>
<div class="a" style="left:1766px;top:231.5px;width:142px;height:104px;background:#efeff4;"></div>
<div class="t" style="left:1780.1px;top:249.51px;font-size:17px;color:#1a1a1a;letter-spacing:0.5px;">Active</div>
<div class="t" style="left:1780.1px;top:273.81px;font-size:17px;color:#1a1a1a;letter-spacing:0.3px;">Resources</div>
<svg style="left:1876px;top:263.3px;" width="13.5" height="13.5" viewBox="0 0 13.5 13.5"><circle cx="6.75" cy="6.75" r="6.75" fill="#8a909b"/><path d="M6.75 5.67v4.859999999999999" stroke="#fff" stroke-width="1.6"/><circle cx="6.75" cy="3.7800000000000002" r="0.9" fill="#fff"/></svg>
<div class="t" style="left:1780.1px;top:305.05px;font-size:14px;font-weight:bold;color:#111;letter-spacing:-0.3px;">2.81K</div>
<div class="t" style="left:1836.8px;top:305.05px;font-size:14px;color:#3a9be6;letter-spacing:0.3px;">viev</div>
<svg style="left:1879.3px;top:308px;" width="7" height="9" viewBox="0 0 7 9"><path d="M1 0.8l4.5 3.7L1 8.2" fill="none" stroke="#333" stroke-width="1.4" stroke-linecap="round"/></svg>
<div class="a" style="left:263.5px;top:351px;width:95px;height:35.5px;background:#000;border-radius:7px"></div>
<svg style="left:279px;top:360px;" width="19" height="17" viewBox="0 0 19 17"><path d="M0.5 16.5V12.5L5 7l3 2.5 5.5-6 4 4.5v8.5z" fill="#fff"/><path d="M0.8 9.5L5 4.8l3 2.3 5.5-6 4 4.5" fill="none" stroke="#fff" stroke-width="1.6" stroke-linejoin="round"/></svg>
<div class="t" style="left:310.4px;top:361.60px;font-size:13px;font-weight:bold;color:#fff;letter-spacing:0.36px;">Data</div>
<svg style="left:376px;top:359.5px;" width="13.5" height="13.5" viewBox="0 0 13.5 13.5"><circle cx="6.75" cy="6.75" r="6" fill="none" stroke="#49a3ea" stroke-width="1.2"/><path d="M6.75 5.8v4" stroke="#49a3ea" stroke-width="1.3"/><circle cx="6.75" cy="3.9" r="0.8" fill="#49a3ea"/></svg>
<div class="a" style="left:407px;top:352px;width:68px;height:34px;background:#000;border:1.3px solid #555;border-radius:7px;overflow:hidden"><div class="a" style="left:0;top:0;width:33px;height:32px;background:#ececec"></div></div>
<svg style="left:416px;top:363px;" width="16" height="13" viewBox="0 0 16 13"><path d="M0.8 12.3h14" stroke="#777" stroke-width="1.5"/><path d="M1 7.5l4.5-4.5 3 1.8L12 0.8l2.5 2.5" fill="none" stroke="#777" stroke-width="1.3" stroke-linejoin="round"/></svg>
<svg style="left:450px;top:362px;" width="16" height="15" viewBox="0 0 16 15"><g fill="none" stroke="#fff" stroke-width="1.5" stroke-linejoin="round"><path d="M0.8 14.2V7.5h4.2V14.2zM5 14.2V0.8h5.3v13.4zM10.3 14.2V4.5h4.8v9.7z"/></g></svg>
<div class="a" style="left:491px;top:351px;width:146px;height:35.5px;background:#ececec;border:1.3px solid #555;border-radius:7px;overflow:hidden"><div class="a" style="left:-1px;top:-1px;width:75px;height:36px;background:#000"></div></div>
<div class="t" style="left:503.6px;top:361.60px;font-size:13px;font-weight:bold;color:#fff;">$</div>
<div class="t" style="left:521.4px;top:361.60px;font-size:13px;font-weight:bold;color:#fff;letter-spacing:-0.88px;">USD</div>
<div class="t" style="left:577.5px;top:361.60px;font-size:13px;color:#a9a9a9;">£</div>
<div class="t" style="left:595.3px;top:361.60px;font-size:13px;color:#a9a9a9;letter-spacing:-1.4px;">GBP</div>
<svg style="left:646.3px;top:359.5px;" width="13.5" height="13.5" viewBox="0 0 13.5 13.5"><circle cx="6.75" cy="6.75" r="6.75" fill="#f4d21f"/><path d="M6.75 3.3v4.5" stroke="#fff" stroke-width="1.5"/><circle cx="6.75" cy="10" r="0.9" fill="#fff"/></svg>
<div class="a" style="left:676.5px;top:351px;width:207.5px;height:35.5px;background:#ececec;border:1.3px solid #444;border-radius:7px;overflow:hidden"><div class="a" style="left:-1px;top:-1px;width:63px;height:36px;background:#000"></div><div class="a" style="left:131.5px;top:0;width:1.3px;height:36px;background:#444"></div></div>
<div class="t" style="left:695.7px;top:361.60px;font-size:13px;font-weight:bold;color:#fff;letter-spacing:0.22px;">Day</div>
<div class="t" style="left:758.2px;top:361.60px;font-size:13px;color:#9a9a9a;letter-spacing:-0.25px;">Week</div>
<div class="t" style="left:827.7px;top:361.60px;font-size:13px;color:#9a9a9a;letter-spacing:0.17px;">Month</div>
<div class="a" style="left:326.10px;top:425.30px;width:1px;height:419.40px;background:#d4d4d4"></div>
<div class="a" style="left:381.67px;top:425.30px;width:1px;height:419.40px;background:#d4d4d4"></div>
<div class="a" style="left:437.24px;top:425.30px;width:1px;height:419.40px;background:#d4d4d4"></div>
<div class="a" style="left:492.81px;top:425.30px;width:1px;height:419.40px;background:#d4d4d4"></div>
<div class="a" style="left:548.38px;top:425.30px;width:1px;height:419.40px;background:#d4d4d4"></div>
<div class="a" style="left:603.95px;top:425.30px;width:1px;height:419.40px;background:#d4d4d4"></div>
<div class="a" style="left:659.52px;top:425.30px;width:1px;height:419.40px;background:#d4d4d4"></div>
<div class="a" style="left:715.09px;top:425.30px;width:1px;height:419.40px;background:#d4d4d4"></div>
<div class="a" style="left:770.66px;top:425.30px;width:1px;height:419.40px;background:#d4d4d4"></div>
<div class="a" style="left:826.23px;top:425.30px;width:1px;height:419.40px;background:#d4d4d4"></div>
<div class="a" style="left:881.80px;top:425.30px;width:1px;height:419.40px;background:#d4d4d4"></div>
<div class="a" style="left:937.37px;top:425.30px;width:1px;height:419.40px;background:#d4d4d4"></div>
<div class="a" style="left:992.94px;top:425.30px;width:1px;height:419.40px;background:#d4d4d4"></div>
<div class="a" style="left:1048.51px;top:425.30px;width:1px;height:419.40px;background:#d4d4d4"></div>
<div class="a" style="left:1104.08px;top:425.30px;width:1px;height:419.40px;background:#d4d4d4"></div>
<div class="a" style="left:1159.65px;top:425.30px;width:1px;height:419.40px;background:#d4d4d4"></div>
<div class="a" style="left:1215.22px;top:425.30px;width:1px;height:419.40px;background:#d4d4d4"></div>
<div class="a" style="left:1270.79px;top:425.30px;width:1px;height:419.40px;background:#d4d4d4"></div>
<div class="a" style="left:1326.36px;top:425.30px;width:1px;height:419.40px;background:#d4d4d4"></div>
<div class="a" style="left:1381.93px;top:425.30px;width:1px;height:419.40px;background:#d4d4d4"></div>
<div class="a" style="left:1437.50px;top:425.30px;width:1px;height:419.40px;background:#d4d4d4"></div>
<div class="a" style="left:1493.07px;top:425.30px;width:1px;height:419.40px;background:#d4d4d4"></div>
<div class="a" style="left:1548.64px;top:425.30px;width:1px;height:419.40px;background:#d4d4d4"></div>
<div class="a" style="left:1604.21px;top:425.30px;width:1px;height:419.40px;background:#d4d4d4"></div>
<div class="a" style="left:1659.78px;top:425.30px;width:1px;height:419.40px;background:#d4d4d4"></div>
<div class="a" style="left:1715.35px;top:425.30px;width:1px;height:419.40px;background:#d4d4d4"></div>
<div class="a" style="left:1770.92px;top:425.30px;width:1px;height:419.40px;background:#d4d4d4"></div>
<div class="a" style="left:1826.49px;top:425.30px;width:1px;height:419.40px;background:#d4d4d4"></div>
<div class="a" style="left:1882.06px;top:425.30px;width:1px;height:419.40px;background:#d4d4d4"></div>
<div class="a" style="left:326.10px;top:425.30px;width:1556.96px;height:1px;background:#d4d4d4"></div>
<div class="a" style="left:326.10px;top:508.98px;width:1556.96px;height:1px;background:#d4d4d4"></div>
<div class="a" style="left:326.10px;top:592.66px;width:1556.96px;height:1px;background:#d4d4d4"></div>
<div class="a" style="left:326.10px;top:676.34px;width:1556.96px;height:1px;background:#d4d4d4"></div>
<div class="a" style="left:326.10px;top:760.02px;width:1556.96px;height:1px;background:#d4d4d4"></div>
<div class="a" style="left:326.10px;top:843.70px;width:1556.96px;height:1px;background:#d4d4d4"></div>
<div class="t" style="left:220px;width:98.5px;text-align:right;top:418.42px;font-size:12.5px;color:#666">$150</div>
<div class="t" style="left:220px;width:98.5px;text-align:right;top:502.10px;font-size:12.5px;color:#666">$120</div>
<div class="t" style="left:220px;width:98.5px;text-align:right;top:585.78px;font-size:12.5px;color:#666">$90</div>
<div class="t" style="left:220px;width:98.5px;text-align:right;top:669.46px;font-size:12.5px;color:#666">$60</div>
<div class="t" style="left:220px;width:98.5px;text-align:right;top:753.14px;font-size:12.5px;color:#666">$30</div>
<div class="t" style="left:220px;width:98.5px;text-align:right;top:836.82px;font-size:12.5px;color:#666">$0</div>
<div class="a" style="left:335.39px;top:581.10px;width:38px;height:2.75px;background:#b3d4e6;border-radius:1.4px"></div>
<div class="a" style="left:335.39px;top:584.40px;width:38px;height:9.05px;background:#e0822e;border-radius:3.0px"></div>
<div class="a" style="left:335.39px;top:594.00px;width:38px;height:40.25px;background:#4f9f12;border-radius:3.0px"></div>
<div class="a" style="left:335.39px;top:634.80px;width:38px;height:34.35px;background:#434a56;border-radius:3.0px"></div>
<div class="a" style="left:335.39px;top:669.70px;width:38px;height:6.15px;background:#00008b;border-radius:3.0px"></div>
<div class="a" style="left:335.39px;top:676.40px;width:38px;height:160.80px;background:#0040e0;border-radius:3.0px"></div>
<div class="a" style="left:335.39px;top:838.00px;width:38px;height:6.20px;background:#e86a6a;border-radius:3.0px"></div>
<div class="a" style="left:390.96px;top:581.60px;width:38px;height:2.65px;background:#b3d4e6;border-radius:1.3px"></div>
<div class="a" style="left:390.96px;top:584.80px;width:38px;height:8.95px;background:#e0822e;border-radius:3.0px"></div>
<div class="a" style="left:390.96px;top:594.30px;width:38px;height:39.95px;background:#4f9f12;border-radius:3.0px"></div>
<div class="a" style="left:390.96px;top:634.80px;width:38px;height:34.35px;background:#434a56;border-radius:3.0px"></div>
<div class="a" style="left:390.96px;top:669.70px;width:38px;height:6.15px;background:#00008b;border-radius:3.0px"></div>
<div class="a" style="left:390.96px;top:676.40px;width:38px;height:160.80px;background:#0040e0;border-radius:3.0px"></div>
<div class="a" style="left:390.96px;top:838.00px;width:38px;height:6.20px;background:#e86a6a;border-radius:3.0px"></div>
<div class="a" style="left:446.53px;top:581.90px;width:38px;height:2.35px;background:#b3d4e6;border-radius:1.2px"></div>
<div class="a" style="left:446.53px;top:584.80px;width:38px;height:8.95px;background:#e0822e;border-radius:3.0px"></div>
<div class="a" style="left:446.53px;top:594.30px;width:38px;height:39.95px;background:#4f9f12;border-radius:3.0px"></div>
<div class="a" style="left:446.53px;top:634.80px;width:38px;height:34.35px;background:#434a56;border-radius:3.0px"></div>
<div class="a" style="left:446.53px;top:669.70px;width:38px;height:6.15px;background:#00008b;border-radius:3.0px"></div>
<div class="a" style="left:446.53px;top:676.40px;width:38px;height:160.80px;background:#0040e0;border-radius:3.0px"></div>
<div class="a" style="left:446.53px;top:838.00px;width:38px;height:6.20px;background:#e86a6a;border-radius:3.0px"></div>
<div class="a" style="left:502.10px;top:578.20px;width:38px;height:2.35px;background:#b3d4e6;border-radius:1.2px"></div>
<div class="a" style="left:502.10px;top:581.10px;width:38px;height:9.25px;background:#e0822e;border-radius:3.0px"></div>
<div class="a" style="left:502.10px;top:590.90px;width:38px;height:40.25px;background:#4f9f12;border-radius:3.0px"></div>
<div class="a" style="left:502.10px;top:631.70px;width:38px;height:34.25px;background:#434a56;border-radius:3.0px"></div>
<div class="a" style="left:502.10px;top:666.50px;width:38px;height:6.45px;background:#00008b;border-radius:3.0px"></div>
<div class="a" style="left:502.10px;top:673.50px;width:38px;height:163.70px;background:#0040e0;border-radius:3.0px"></div>
<div class="a" style="left:502.10px;top:838.00px;width:38px;height:6.20px;background:#e86a6a;border-radius:3.0px"></div>
<div class="a" style="left:557.66px;top:579.40px;width:38px;height:2.65px;background:#b3d4e6;border-radius:1.3px"></div>
<div class="a" style="left:557.66px;top:582.60px;width:38px;height:8.65px;background:#e0822e;border-radius:3.0px"></div>
<div class="a" style="left:557.66px;top:591.80px;width:38px;height:40.25px;background:#4f9f12;border-radius:3.0px"></div>
<div class="a" style="left:557.66px;top:632.60px;width:38px;height:34.45px;background:#434a56;border-radius:3.0px"></div>
<div class="a" style="left:557.66px;top:667.60px;width:38px;height:6.35px;background:#00008b;border-radius:3.0px"></div>
<div class="a" style="left:557.66px;top:674.50px;width:38px;height:162.70px;background:#0040e0;border-radius:3.0px"></div>
<div class="a" style="left:557.66px;top:838.00px;width:38px;height:6.20px;background:#e86a6a;border-radius:3.0px"></div>
<div class="a" style="left:613.24px;top:574.10px;width:38px;height:5.25px;background:#b3d4e6;border-radius:2.6px"></div>
<div class="a" style="left:613.24px;top:579.90px;width:38px;height:8.95px;background:#e0822e;border-radius:3.0px"></div>
<div class="a" style="left:613.24px;top:589.40px;width:38px;height:39.95px;background:#4f9f12;border-radius:3.0px"></div>
<div class="a" style="left:613.24px;top:629.90px;width:38px;height:35.45px;background:#434a56;border-radius:3.0px"></div>
<div class="a" style="left:613.24px;top:665.90px;width:38px;height:5.75px;background:#00008b;border-radius:2.9px"></div>
<div class="a" style="left:613.24px;top:672.20px;width:38px;height:165.00px;background:#0040e0;border-radius:3.0px"></div>
<div class="a" style="left:613.24px;top:838.00px;width:38px;height:6.20px;background:#e86a6a;border-radius:3.0px"></div>
<div class="a" style="left:668.81px;top:564.30px;width:38px;height:5.25px;background:#b3d4e6;border-radius:2.6px"></div>
<div class="a" style="left:668.81px;top:570.10px;width:38px;height:9.25px;background:#e0822e;border-radius:3.0px"></div>
<div class="a" style="left:668.81px;top:579.90px;width:38px;height:40.25px;background:#4f9f12;border-radius:3.0px"></div>
<div class="a" style="left:668.81px;top:620.70px;width:38px;height:38.45px;background:#434a56;border-radius:3.0px"></div>
<div class="a" style="left:668.81px;top:659.70px;width:38px;height:5.95px;background:#00008b;border-radius:3.0px"></div>
<div class="a" style="left:668.81px;top:666.20px;width:38px;height:171.00px;background:#0040e0;border-radius:3.0px"></div>
<div class="a" style="left:668.81px;top:838.00px;width:38px;height:6.20px;background:#e86a6a;border-radius:3.0px"></div>
<div class="a" style="left:724.38px;top:577.00px;width:38px;height:5.25px;background:#b3d4e6;border-radius:2.6px"></div>
<div class="a" style="left:724.38px;top:582.80px;width:38px;height:8.95px;background:#e0822e;border-radius:3.0px"></div>
<div class="a" style="left:724.38px;top:592.30px;width:38px;height:39.95px;background:#4f9f12;border-radius:3.0px"></div>
<div class="a" style="left:724.38px;top:632.80px;width:38px;height:35.55px;background:#434a56;border-radius:3.0px"></div>
<div class="a" style="left:724.38px;top:668.90px;width:38px;height:5.55px;background:#00008b;border-radius:2.8px"></div>
<div class="a" style="left:724.38px;top:675.00px;width:38px;height:162.20px;background:#0040e0;border-radius:3.0px"></div>
<div class="a" style="left:724.38px;top:838.00px;width:38px;height:6.20px;background:#e86a6a;border-radius:3.0px"></div>
<div class="a" style="left:779.95px;top:576.00px;width:38px;height:5.25px;background:#b3d4e6;border-radius:2.6px"></div>
<div class="a" style="left:779.95px;top:581.80px;width:38px;height:8.75px;background:#e0822e;border-radius:3.0px"></div>
<div class="a" style="left:779.95px;top:591.10px;width:38px;height:40.35px;background:#4f9f12;border-radius:3.0px"></div>
<div class="a" style="left:779.95px;top:632.00px;width:38px;height:36.35px;background:#434a56;border-radius:3.0px"></div>
<div class="a" style="left:779.95px;top:668.90px;width:38px;height:5.55px;background:#00008b;border-radius:2.8px"></div>
<div class="a" style="left:779.95px;top:675.00px;width:38px;height:162.20px;background:#0040e0;border-radius:3.0px"></div>
<div class="a" style="left:779.95px;top:838.00px;width:38px;height:6.20px;background:#e86a6a;border-radius:3.0px"></div>
<div class="a" style="left:835.51px;top:570.90px;width:38px;height:7.75px;background:#b3d4e6;border-radius:3.0px"></div>
<div class="a" style="left:835.51px;top:579.20px;width:38px;height:8.85px;background:#e0822e;border-radius:3.0px"></div>
<div class="a" style="left:835.51px;top:588.60px;width:38px;height:40.75px;background:#4f9f12;border-radius:3.0px"></div>
<div class="a" style="left:835.51px;top:629.90px;width:38px;height:38.45px;background:#434a56;border-radius:3.0px"></div>
<div class="a" style="left:835.51px;top:668.90px;width:38px;height:5.55px;background:#00008b;border-radius:2.8px"></div>
<div class="a" style="left:835.51px;top:675.00px;width:38px;height:162.20px;background:#0040e0;border-radius:3.0px"></div>
<div class="a" style="left:835.51px;top:838.00px;width:38px;height:6.20px;background:#e86a6a;border-radius:3.0px"></div>
<div class="a" style="left:891.09px;top:572.60px;width:38px;height:4.95px;background:#b3d4e6;border-radius:2.5px"></div>
<div class="a" style="left:891.09px;top:578.10px;width:38px;height:9.25px;background:#e0822e;border-radius:3.0px"></div>
<div class="a" style="left:891.09px;top:587.90px;width:38px;height:40.35px;background:#4f9f12;border-radius:3.0px"></div>
<div class="a" style="left:891.09px;top:628.80px;width:38px;height:38.35px;background:#434a56;border-radius:3.0px"></div>
<div class="a" style="left:891.09px;top:667.70px;width:38px;height:6.05px;background:#00008b;border-radius:3.0px"></div>
<div class="a" style="left:891.09px;top:674.30px;width:38px;height:162.90px;background:#0040e0;border-radius:3.0px"></div>
<div class="a" style="left:891.09px;top:838.00px;width:38px;height:6.20px;background:#e86a6a;border-radius:3.0px"></div>
<div class="a" style="left:946.65px;top:563.10px;width:38px;height:5.35px;background:#b3d4e6;border-radius:2.7px"></div>
<div class="a" style="left:946.65px;top:569.00px;width:38px;height:8.55px;background:#e0822e;border-radius:3.0px"></div>
<div class="a" style="left:946.65px;top:578.10px;width:38px;height:40.65px;background:#4f9f12;border-radius:3.0px"></div>
<div class="a" style="left:946.65px;top:619.30px;width:38px;height:36.95px;background:#434a56;border-radius:3.0px"></div>
<div class="a" style="left:946.65px;top:656.80px;width:38px;height:6.15px;background:#00008b;border-radius:3.0px"></div>
<div class="a" style="left:946.65px;top:663.50px;width:38px;height:172.30px;background:#0040e0;border-radius:3.0px"></div>
<div class="a" style="left:946.65px;top:836.60px;width:38px;height:7.60px;background:#e86a6a;border-radius:3.0px"></div>
<div class="a" style="left:1002.23px;top:565.00px;width:38px;height:5.35px;background:#b3d4e6;border-radius:2.7px"></div>
<div class="a" style="left:1002.23px;top:570.90px;width:38px;height:8.85px;background:#e0822e;border-radius:3.0px"></div>
<div class="a" style="left:1002.23px;top:580.30px;width:38px;height:40.35px;background:#4f9f12;border-radius:3.0px"></div>
<div class="a" style="left:1002.23px;top:621.20px;width:38px;height:38.75px;background:#434a56;border-radius:3.0px"></div>
<div class="a" style="left:1002.23px;top:660.50px;width:38px;height:6.05px;background:#00008b;border-radius:3.0px"></div>
<div class="a" style="left:1002.23px;top:667.10px;width:38px;height:168.70px;background:#0040e0;border-radius:3.0px"></div>
<div class="a" style="left:1002.23px;top:836.60px;width:38px;height:7.60px;background:#e86a6a;border-radius:3.0px"></div>
<div class="a" style="left:1057.80px;top:563.90px;width:38px;height:5.55px;background:#b3d4e6;border-radius:2.8px"></div>
<div class="a" style="left:1057.80px;top:570.00px;width:38px;height:8.65px;background:#e0822e;border-radius:3.0px"></div>
<div class="a" style="left:1057.80px;top:579.20px;width:38px;height:40.25px;background:#4f9f12;border-radius:3.0px"></div>
<div class="a" style="left:1057.80px;top:620.00px;width:38px;height:38.05px;background:#434a56;border-radius:3.0px"></div>
<div class="a" style="left:1057.80px;top:658.60px;width:38px;height:6.05px;background:#00008b;border-radius:3.0px"></div>
<div class="a" style="left:1057.80px;top:665.20px;width:38px;height:170.60px;background:#0040e0;border-radius:3.0px"></div>
<div class="a" style="left:1057.80px;top:836.60px;width:38px;height:7.60px;background:#e86a6a;border-radius:3.0px"></div>
<div class="a" style="left:1113.37px;top:575.50px;width:38px;height:5.35px;background:#b3d4e6;border-radius:2.7px"></div>
<div class="a" style="left:1113.37px;top:581.40px;width:38px;height:8.85px;background:#e0822e;border-radius:3.0px"></div>
<div class="a" style="left:1113.37px;top:590.80px;width:38px;height:40.65px;background:#4f9f12;border-radius:3.0px"></div>
<div class="a" style="left:1113.37px;top:632.00px;width:38px;height:34.15px;background:#434a56;border-radius:3.0px"></div>
<div class="a" style="left:1113.37px;top:666.70px;width:38px;height:5.95px;background:#00008b;border-radius:3.0px"></div>
<div class="a" style="left:1113.37px;top:673.20px;width:38px;height:162.60px;background:#0040e0;border-radius:3.0px"></div>
<div class="a" style="left:1113.37px;top:836.60px;width:38px;height:7.60px;background:#e86a6a;border-radius:3.0px"></div>
<div class="a" style="left:1168.93px;top:575.40px;width:38px;height:5.35px;background:#b3d4e6;border-radius:2.7px"></div>
<div class="a" style="left:1168.93px;top:581.30px;width:38px;height:8.95px;background:#e0822e;border-radius:3.0px"></div>
<div class="a" style="left:1168.93px;top:590.80px;width:38px;height:40.05px;background:#4f9f12;border-radius:3.0px"></div>
<div class="a" style="left:1168.93px;top:631.40px;width:38px;height:34.95px;background:#434a56;border-radius:3.0px"></div>
<div class="a" style="left:1168.93px;top:666.90px;width:38px;height:5.65px;background:#00008b;border-radius:2.8px"></div>
<div class="a" style="left:1168.93px;top:673.10px;width:38px;height:162.70px;background:#0040e0;border-radius:3.0px"></div>
<div class="a" style="left:1168.93px;top:836.60px;width:38px;height:7.60px;background:#e86a6a;border-radius:3.0px"></div>
<div class="a" style="left:1224.51px;top:560.00px;width:38px;height:5.45px;background:#b3d4e6;border-radius:2.7px"></div>
<div class="a" style="left:1224.51px;top:566.00px;width:38px;height:8.45px;background:#e0822e;border-radius:3.0px"></div>
<div class="a" style="left:1224.51px;top:575.00px;width:38px;height:40.55px;background:#4f9f12;border-radius:3.0px"></div>
<div class="a" style="left:1224.51px;top:616.10px;width:38px;height:38.25px;background:#434a56;border-radius:3.0px"></div>
<div class="a" style="left:1224.51px;top:654.90px;width:38px;height:5.85px;background:#00008b;border-radius:2.9px"></div>
<div class="a" style="left:1224.51px;top:661.30px;width:38px;height:174.50px;background:#0040e0;border-radius:3.0px"></div>
<div class="a" style="left:1224.51px;top:836.60px;width:38px;height:7.60px;background:#e86a6a;border-radius:3.0px"></div>
<div class="a" style="left:1280.08px;top:553.90px;width:38px;height:5.55px;background:#b3d4e6;border-radius:2.8px"></div>
<div class="a" style="left:1280.08px;top:560.00px;width:38px;height:8.35px;background:#e0822e;border-radius:3.0px"></div>
<div class="a" style="left:1280.08px;top:568.90px;width:38px;height:40.85px;background:#4f9f12;border-radius:3.0px"></div>
<div class="a" style="left:1280.08px;top:610.30px;width:38px;height:49.05px;background:#434a56;border-radius:3.0px"></div>
<div class="a" style="left:1280.08px;top:659.90px;width:38px;height:5.65px;background:#00008b;border-radius:2.8px"></div>
<div class="a" style="left:1280.08px;top:666.10px;width:38px;height:169.70px;background:#0040e0;border-radius:3.0px"></div>
<div class="a" style="left:1280.08px;top:836.60px;width:38px;height:7.60px;background:#e86a6a;border-radius:3.0px"></div>
<div class="a" style="left:1335.64px;top:564.10px;width:38px;height:5.25px;background:#b3d4e6;border-radius:2.6px"></div>
<div class="a" style="left:1335.64px;top:569.90px;width:38px;height:8.65px;background:#e0822e;border-radius:3.0px"></div>
<div class="a" style="left:1335.64px;top:579.10px;width:38px;height:40.25px;background:#4f9f12;border-radius:3.0px"></div>
<div class="a" style="left:1335.64px;top:619.90px;width:38px;height:38.15px;background:#434a56;border-radius:3.0px"></div>
<div class="a" style="left:1335.64px;top:658.60px;width:38px;height:5.55px;background:#00008b;border-radius:2.8px"></div>
<div class="a" style="left:1335.64px;top:664.70px;width:38px;height:171.10px;background:#0040e0;border-radius:3.0px"></div>
<div class="a" style="left:1335.64px;top:836.60px;width:38px;height:7.60px;background:#e86a6a;border-radius:3.0px"></div>
<div class="a" style="left:1391.22px;top:564.80px;width:38px;height:5.25px;background:#b3d4e6;border-radius:2.6px"></div>
<div class="a" style="left:1391.22px;top:570.60px;width:38px;height:8.95px;background:#e0822e;border-radius:3.0px"></div>
<div class="a" style="left:1391.22px;top:580.10px;width:38px;height:40.25px;background:#4f9f12;border-radius:3.0px"></div>
<div class="a" style="left:1391.22px;top:620.90px;width:38px;height:40.05px;background:#434a56;border-radius:3.0px"></div>
<div class="a" style="left:1391.22px;top:661.50px;width:38px;height:5.95px;background:#00008b;border-radius:3.0px"></div>
<div class="a" style="left:1391.22px;top:668.00px;width:38px;height:167.80px;background:#0040e0;border-radius:3.0px"></div>
<div class="a" style="left:1391.22px;top:836.60px;width:38px;height:7.60px;background:#e86a6a;border-radius:3.0px"></div>
<div class="a" style="left:1446.78px;top:567.20px;width:38px;height:5.25px;background:#b3d4e6;border-radius:2.6px"></div>
<div class="a" style="left:1446.78px;top:573.00px;width:38px;height:8.95px;background:#e0822e;border-radius:3.0px"></div>
<div class="a" style="left:1446.78px;top:582.50px;width:38px;height:40.15px;background:#4f9f12;border-radius:3.0px"></div>
<div class="a" style="left:1446.78px;top:623.20px;width:38px;height:38.55px;background:#434a56;border-radius:3.0px"></div>
<div class="a" style="left:1446.78px;top:662.30px;width:38px;height:6.05px;background:#00008b;border-radius:3.0px"></div>
<div class="a" style="left:1446.78px;top:668.90px;width:38px;height:166.90px;background:#0040e0;border-radius:3.0px"></div>
<div class="a" style="left:1446.78px;top:836.60px;width:38px;height:7.60px;background:#e86a6a;border-radius:3.0px"></div>
<div class="a" style="left:1502.36px;top:575.50px;width:38px;height:2.35px;background:#b3d4e6;border-radius:1.2px"></div>
<div class="a" style="left:1502.36px;top:578.40px;width:38px;height:8.95px;background:#e0822e;border-radius:3.0px"></div>
<div class="a" style="left:1502.36px;top:587.90px;width:38px;height:40.35px;background:#4f9f12;border-radius:3.0px"></div>
<div class="a" style="left:1502.36px;top:628.80px;width:38px;height:34.45px;background:#434a56;border-radius:3.0px"></div>
<div class="a" style="left:1502.36px;top:663.80px;width:38px;height:5.95px;background:#00008b;border-radius:3.0px"></div>
<div class="a" style="left:1502.36px;top:670.30px;width:38px;height:165.50px;background:#0040e0;border-radius:3.0px"></div>
<div class="a" style="left:1502.36px;top:836.60px;width:38px;height:7.60px;background:#e86a6a;border-radius:3.0px"></div>
<div class="a" style="left:1557.93px;top:573.00px;width:38px;height:5.35px;background:#b3d4e6;border-radius:2.7px"></div>
<div class="a" style="left:1557.93px;top:578.90px;width:38px;height:8.75px;background:#e0822e;border-radius:3.0px"></div>
<div class="a" style="left:1557.93px;top:588.20px;width:38px;height:40.45px;background:#4f9f12;border-radius:3.0px"></div>
<div class="a" style="left:1557.93px;top:629.20px;width:38px;height:34.75px;background:#434a56;border-radius:3.0px"></div>
<div class="a" style="left:1557.93px;top:664.50px;width:38px;height:5.75px;background:#00008b;border-radius:2.9px"></div>
<div class="a" style="left:1557.93px;top:670.80px;width:38px;height:165.00px;background:#0040e0;border-radius:3.0px"></div>
<div class="a" style="left:1557.93px;top:836.60px;width:38px;height:7.60px;background:#e86a6a;border-radius:3.0px"></div>
<div class="a" style="left:1613.49px;top:467.60px;width:38px;height:55.45px;background:#b3d4e6;border-radius:3.0px"></div>
<div class="a" style="left:1613.49px;top:523.60px;width:38px;height:8.55px;background:#e0822e;border-radius:3.0px"></div>
<div class="a" style="left:1613.49px;top:532.70px;width:38px;height:42.75px;background:#4f9f12;border-radius:3.0px"></div>
<div class="a" style="left:1613.49px;top:576.00px;width:38px;height:53.95px;background:#434a56;border-radius:3.0px"></div>
<div class="a" style="left:1613.49px;top:630.50px;width:38px;height:6.05px;background:#00008b;border-radius:3.0px"></div>
<div class="a" style="left:1613.49px;top:637.10px;width:38px;height:207.10px;background:#0040e0;border-radius:3.0px"></div>
<div class="a" style="left:1669.07px;top:520.90px;width:38px;height:5.05px;background:#b3d4e6;border-radius:2.5px"></div>
<div class="a" style="left:1669.07px;top:526.50px;width:38px;height:8.65px;background:#e0822e;border-radius:3.0px"></div>
<div class="a" style="left:1669.07px;top:535.70px;width:38px;height:42.65px;background:#4f9f12;border-radius:3.0px"></div>
<div class="a" style="left:1669.07px;top:578.90px;width:38px;height:53.65px;background:#434a56;border-radius:3.0px"></div>
<div class="a" style="left:1669.07px;top:633.10px;width:38px;height:6.05px;background:#00008b;border-radius:3.0px"></div>
<div class="a" style="left:1669.07px;top:639.70px;width:38px;height:204.50px;background:#0040e0;border-radius:3.0px"></div>
<div class="a" style="left:1724.64px;top:515.60px;width:38px;height:5.35px;background:#b3d4e6;border-radius:2.7px"></div>
<div class="a" style="left:1724.64px;top:521.50px;width:38px;height:8.35px;background:#e0822e;border-radius:3.0px"></div>
<div class="a" style="left:1724.64px;top:530.40px;width:38px;height:42.35px;background:#4f9f12;border-radius:3.0px"></div>
<div class="a" style="left:1724.64px;top:573.30px;width:38px;height:53.75px;background:#434a56;border-radius:3.0px"></div>
<div class="a" style="left:1724.64px;top:627.60px;width:38px;height:5.95px;background:#00008b;border-radius:3.0px"></div>
<div class="a" style="left:1724.64px;top:634.10px;width:38px;height:208.90px;background:#0040e0;border-radius:3.0px"></div>
<div class="a" style="left:1724.64px;top:843.20px;width:38px;height:1.00px;background:#e86a6a;border-radius:0.5px"></div>
<div class="a" style="left:1780.20px;top:728.20px;width:38px;height:4.95px;background:#e0822e;border-radius:2.5px"></div>
<div class="a" style="left:1780.20px;top:733.70px;width:38px;height:21.45px;background:#4f9f12;border-radius:3.0px"></div>
<div class="a" style="left:1780.20px;top:755.70px;width:38px;height:18.25px;background:#434a56;border-radius:3.0px"></div>
<div class="a" style="left:1780.20px;top:774.50px;width:38px;height:3.55px;background:#00008b;border-radius:1.8px"></div>
<div class="a" style="left:1780.20px;top:778.60px;width:38px;height:64.40px;background:#0040e0;border-radius:3.0px"></div>
<div class="a" style="left:1780.20px;top:843.20px;width:38px;height:1.00px;background:#e86a6a;border-radius:0.5px"></div>
<div class="vl" style="left:348.69px;top:861px;width:13px">Nov 2025</div>
<div class="vl" style="left:404.26px;top:861px;width:13px">Nov 09</div>
<div class="vl" style="left:459.83px;top:861px;width:13px">Nov 10</div>
<div class="vl" style="left:515.39px;top:861px;width:13px">Nov 11</div>
<div class="vl" style="left:570.96px;top:861px;width:13px">Nov 12</div>
<div class="vl" style="left:626.53px;top:861px;width:13px">Nov 13</div>
<div class="vl" style="left:682.11px;top:861px;width:13px">Nov 14</div>
<div class="vl" style="left:737.67px;top:861px;width:13px">Nov 15</div>
<div class="vl" style="left:793.25px;top:861px;width:13px">Nov 16</div>
<div class="vl" style="left:848.81px;top:861px;width:13px">Nov 17</div>
<div class="vl" style="left:904.38px;top:861px;width:13px">Nov 18</div>
<div class="vl" style="left:959.95px;top:861px;width:13px">Nov 19</div>
<div class="vl" style="left:1015.52px;top:861px;width:13px">Nov 20</div>
<div class="vl" style="left:1071.10px;top:861px;width:13px">Nov 21</div>
<div class="vl" style="left:1126.66px;top:861px;width:13px">Nov 22</div>
<div class="vl" style="left:1182.23px;top:861px;width:13px">Nov 23</div>
<div class="vl" style="left:1237.81px;top:861px;width:13px">Nov 24</div>
<div class="vl" style="left:1293.38px;top:861px;width:13px">Nov 25</div>
<div class="vl" style="left:1348.94px;top:861px;width:13px">Nov 26</div>
<div class="vl" style="left:1404.52px;top:861px;width:13px">Nov 27</div>
<div class="vl" style="left:1460.08px;top:861px;width:13px">Nov 28</div>
<div class="vl" style="left:1515.65px;top:861px;width:13px">Nov 29</div>
<div class="vl" style="left:1571.23px;top:861px;width:13px">Nov 30</div>
<div class="vl" style="left:1626.79px;top:861px;width:13px">Dec 2025</div>
<div class="vl" style="left:1682.37px;top:861px;width:13px">Dec 02</div>
<div class="vl" style="left:1737.94px;top:861px;width:13px">Dec 03</div>
<div class="vl" style="left:1793.50px;top:861px;width:13px">Dec 04</div>
<div class="vl" style="left:1849.08px;top:861px;width:13px">Dec 05</div>
<div class="t" style="left:263.7px;top:977.41px;font-size:17px;font-weight:bold;color:#111;letter-spacing:0.15px;">Breakdown</div>
<div class="a" style="left:1711.5px;top:969px;width:194.5px;height:36px;background:#000;border-radius:6px"></div>
<div class="t" style="left:1730.5px;top:980.50px;font-size:13px;font-weight:bold;color:#fff;letter-spacing:-0.03px;">Visualize Breakdown</div>
<svg style="left:1876.5px;top:980px;" width="9" height="14" viewBox="0 0 9 14"><path d="M1 1l6.5 6L1 13" fill="none" stroke="#fff" stroke-width="1.8" stroke-linecap="round" stroke-linejoin="round"/></svg>
<div class="a" style="left:263.7px;top:1057px;width:1642px;height:23px;background:#f9f9f9;border-top:1px solid #fff"></div>
<div class="a" style="left:263.7px;top:1018.7px;width:1642px;height:38.5px;background:#333;border-radius:13px 13px 0 0"></div>
<div class="a" style="left:372.3px;top:1018.7px;width:1px;height:38.5px;background:#505050;"></div>
<div class="a" style="left:914px;top:1018.7px;width:1px;height:38.5px;background:#505050;"></div>
<div class="a" style="left:1084.4px;top:1018.7px;width:1px;height:38.5px;background:#505050;"></div>
<div class="a" style="left:1288.4px;top:1018.7px;width:1px;height:38.5px;background:#505050;"></div>
<div class="a" style="left:1797px;top:1018.7px;width:1px;height:38.5px;background:#505050;"></div>
<div class="t" style="left:395.7px;top:1031.80px;font-size:13px;font-weight:bold;color:#fff;letter-spacing:0.4px;">Name</div>
<svg style="left:876px;top:1032px;" width="14" height="13" viewBox="0 0 14 13"><g fill="none" stroke="#fff" stroke-width="1.2" stroke-linecap="round" stroke-linejoin="round"><path d="M4 12V1M1.3 3.7L4 1l2.7 2.7M10 1v11M7.3 9.3L10 12l2.7-2.7"/></g></svg>
<div class="t" style="left:938.3px;top:1031.80px;font-size:13px;font-weight:bold;color:#fff;letter-spacing:-0.24px;">Number of Reso</div>
<svg style="left:1046px;top:1032px;" width="14" height="13" viewBox="0 0 14 13"><g fill="none" stroke="#fff" stroke-width="1.2" stroke-linecap="round" stroke-linejoin="round"><path d="M4 12V1M1.3 3.7L4 1l2.7 2.7M10 1v11M7.3 9.3L10 12l2.7-2.7"/></g></svg>
<div class="t" style="left:1108.3px;top:1031.80px;font-size:13px;font-weight:bold;color:#fff;">Total Cost</div>
<svg style="left:1252px;top:1035px;" width="10" height="6" viewBox="0 0 10 6"><path d="M0.8 0.8l4.2 4.2 4.2-4.2" fill="none" stroke="#fff" stroke-width="1.4" stroke-linecap="round"/></svg>
<svg style="left:1313px;top:1031px;" width="13" height="13" viewBox="0 0 13 13"><circle cx="6.5" cy="6.5" r="6.5" fill="#fff"/><path d="M6.5 5.5v4.5" stroke="#333" stroke-width="1.6"/><circle cx="6.5" cy="3.6" r="0.9" fill="#333"/></svg>
<div class="t" style="left:1332.0px;top:1029.10px;font-size:15px;color:#fff;letter-spacing:0.27px;">Trend</div>
<svg style="left:1419px;top:1032px;" width="14" height="13" viewBox="0 0 14 13"><g fill="none" stroke="#fff" stroke-width="1.2" stroke-linecap="round" stroke-linejoin="round"><path d="M4 12V1M1.3 3.7L4 1l2.7 2.7M10 1v11M7.3 9.3L10 12l2.7-2.7"/></g></svg>
<div class="t" style="left:1470.0px;top:1029.10px;font-size:15px;font-weight:bold;color:#fff;">Past 90 Days</div>
</body></html>
